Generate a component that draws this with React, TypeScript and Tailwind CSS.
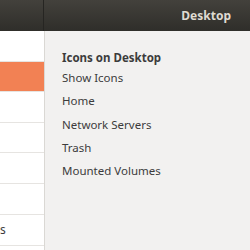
export default function App() {
  const rows = [
    { h: 'h-[31px]', active: false, label: '' },
    { h: 'h-[30px]', active: true, label: '' },
    { h: 'h-[31px]', active: false, label: '' },
    { h: 'h-[30px]', active: false, label: '' },
    { h: 'h-[31px]', active: false, label: '' },
    { h: 'h-[31px]', active: false, label: '' },
    { h: 'h-[31px]', active: false, label: 's' },
    { h: 'h-[31px]', active: false, label: '' },
  ];

  return (
    <div className="w-[250px] h-[250px] overflow-hidden flex flex-col bg-[#f2f1f0] font-['Noto_Sans',sans-serif]">
      {/* title bar */}
      <div className="h-[31px] shrink-0 flex bg-gradient-to-b from-[#43413c] to-[#2f2e2a]">
        <div className="w-[44px] border-r border-[#262522]" />
        <div className="flex-1 flex items-center justify-end pr-[19px]">
          <span className="text-[12px] font-bold text-[#dfdbd2]">Desktop</span>
        </div>
      </div>

      <div className="flex flex-1 min-h-0">
        {/* sidebar */}
        <div className="w-[45px] shrink-0 bg-white border-r border-[#dad8d4] flex flex-col">
          {rows.map((r, i) => (
            <div
              key={i}
              className={`${r.h} shrink-0 border-b border-[#e6e4e1] flex items-center text-[12px] text-[#3c3c3c] leading-none ${
                r.active ? 'bg-[#f28154]' : ''
              }`}
            >
              {r.label}
            </div>
          ))}
        </div>

        {/* content */}
        <div className="flex-1 pl-[17px] pt-[19px] text-[11.5px] text-[#3c3c3c]">
          <div className="font-bold leading-[16px]">Icons on Desktop</div>
          <ul className="flex flex-col">
            <li className="leading-[23.25px]">Show Icons</li>
            <li className="leading-[23.25px]">Home</li>
            <li className="leading-[23.25px]">Network Servers</li>
            <li className="leading-[23.25px]">Trash</li>
            <li className="leading-[23.25px]">Mounted Volumes</li>
          </ul>
        </div>
      </div>
    </div>
  );
}
